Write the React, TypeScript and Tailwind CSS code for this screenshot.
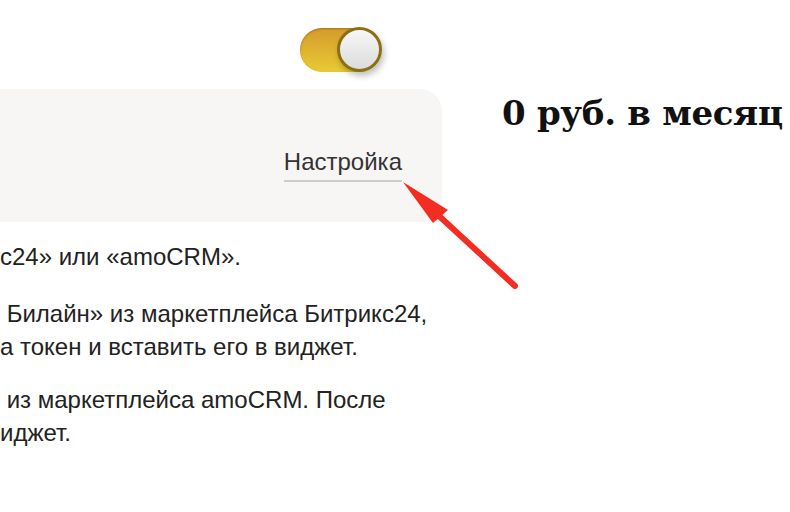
import React from 'react';

function Toggle() {
  return (
    <div className="relative h-[44px] w-[80px] rounded-full bg-gradient-to-b from-[#d59a2c] to-[#e8cb35] shadow-[inset_0_1px_2px_rgba(120,80,0,0.5)]">
      <div className="absolute right-[-2px] top-[-1px] h-[45px] w-[45px] rounded-full border-[3px] border-[#8c6f14] bg-gradient-to-b from-[#f7f7f7] to-[#dcdcdc] shadow-[2px_4px_6px_rgba(0,0,0,0.25)]" />
    </div>
  );
}

function Arrow() {
  return (
    <svg className="pointer-events-none absolute left-0 top-0" width="790" height="512" viewBox="0 0 790 512">
      <line x1="438" y1="215" x2="515" y2="286" stroke="#f52c22" strokeWidth="6" strokeLinecap="round" />
      <polygon points="403,182 448,210 433,223" fill="#f52c22" />
    </svg>
  );
}

export default function App() {
  return (
    <div className="relative h-[512px] w-[790px] overflow-hidden bg-white" style={{ fontFamily: '"Liberation Sans", Arial, sans-serif' }}>
      <div className="flex">
        <div className="w-[442px]">
          <div className="flex justify-end pr-[62px] pt-[28px]">
            <Toggle />
          </div>
          <div className="mt-[17px] flex h-[133px] items-end justify-end rounded-tr-[22px] bg-[#f7f6f4] pb-[40px] pr-[40px]">
            <span className="border-b-2 border-[#cccccc] pb-[4px] text-[24px] leading-[28px] text-[#333333]">Настройка</span>
          </div>
          <div className="pt-[18px] text-[24px] leading-[33px] text-[#222222]">
            <p>с24» или «amoCRM».</p>
            <p className="mt-[24px] whitespace-pre">{' Билайн» из маркетплейса Битрикс24,'}</p>
            <p className="whitespace-pre">а токен и вставить его в виджет.</p>
            <p className="mt-[20px] whitespace-pre">{' из маркетплейса amoCRM. После'}</p>
            <p className="whitespace-pre">иджет.</p>
          </div>
        </div>
        <div className="pl-[60px] pt-[92px]">
          <h1 className="whitespace-nowrap text-[34px] font-bold leading-[42px] tracking-[-0.3px] text-[#111111]" style={{ fontFamily: '"DejaVu Serif", serif' }}>
            0 руб. в месяц
          </h1>
        </div>
      </div>
      <Arrow />
    </div>
  );
}
